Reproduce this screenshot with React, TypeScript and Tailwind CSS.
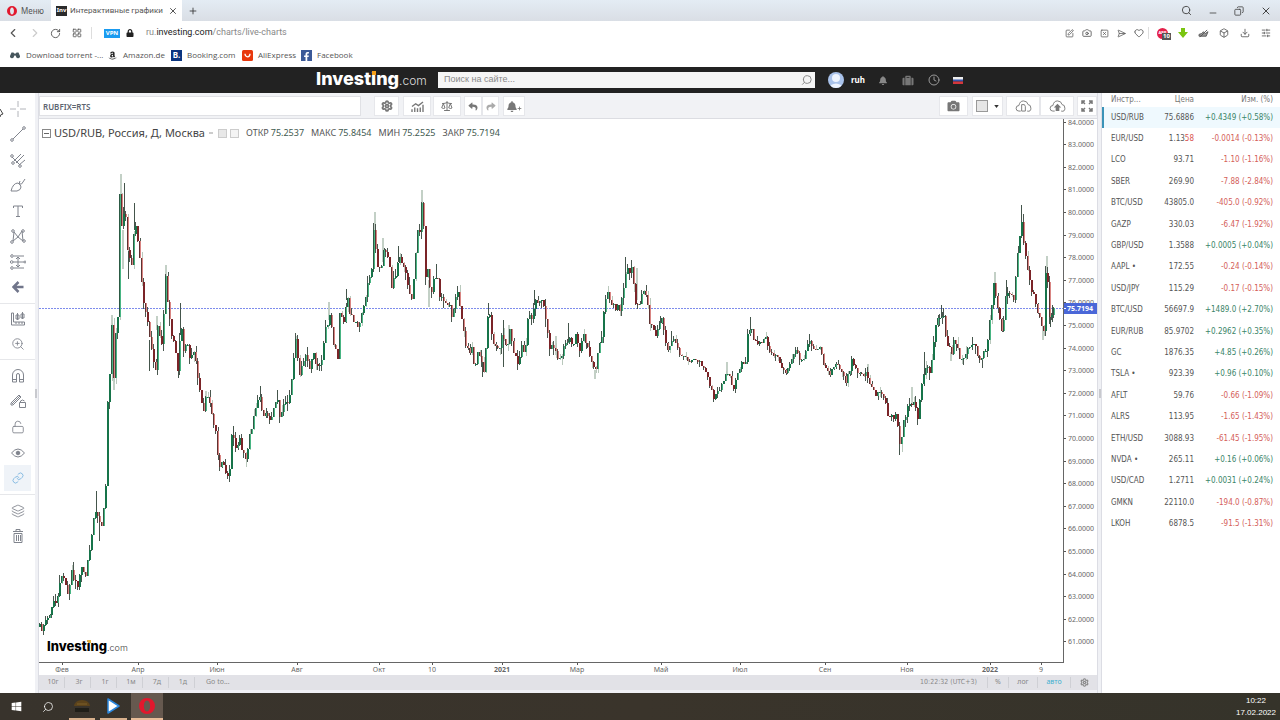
import React from "react";
import {
  Search, Minus, Copy, X, ChevronLeft, ChevronRight, RotateCw, LayoutGrid, SquarePen, Camera, SquareX,
  SendHorizontal, Heart, Box, Download, SlidersHorizontal, Clock, Settings, Scale, ZoomIn,
  LockOpen, Eye, Link, Layers, Plus,
} from "lucide-react";
import { FaCamera, FaReply, FaShare, FaBell, FaLock, FaWindows, FaFacebookF, FaAmazon, FaSuitcase } from "react-icons/fa";

/* ---------- data ---------- */

type Quote = [name: string, price: string, tick: string, change: string];

const quotes: Quote[] = [
  ["USD/RUB", "75.6886", "", "+0.4349 (+0.58%)"],
  ["EUR/USD", "1.13", "58", "-0.0014 (-0.13%)"],
  ["LCO", "93.71", "", "-1.10 (-1.16%)"],
  ["SBER", "269.90", "", "-7.88 (-2.84%)"],
  ["BTC/USD", "43805.0", "", "-405.0 (-0.92%)"],
  ["GAZP", "330.03", "", "-6.47 (-1.92%)"],
  ["GBP/USD", "1.3588", "", "+0.0005 (+0.04%)"],
  ["AAPL •", "172.55", "", "-0.24 (-0.14%)"],
  ["USD/JPY", "115.29", "", "-0.17 (-0.15%)"],
  ["BTC/USD", "56697.9", "", "+1489.0 (+2.70%)"],
  ["EUR/RUB", "85.9702", "", "+0.2962 (+0.35%)"],
  ["GC", "1876.35", "", "+4.85 (+0.26%)"],
  ["TSLA •", "923.39", "", "+0.96 (+0.10%)"],
  ["AFLT", "59.76", "", "-0.66 (-1.09%)"],
  ["ALRS", "113.95", "", "-1.65 (-1.43%)"],
  ["ETH/USD", "3088.93", "", "-61.45 (-1.95%)"],
  ["NVDA •", "265.11", "", "+0.16 (+0.06%)"],
  ["USD/CAD", "1.2711", "", "+0.0031 (+0.24%)"],
  ["GMKN", "22110.0", "", "-194.0 (-0.87%)"],
  ["LKOH", "6878.5", "", "-91.5 (-1.31%)"],
];

/* Closing levels along the time axis: x, y pairs in chart units. */
const closes = [
  39, 626, 41, 629, 43, 624, 47, 620, 50, 612, 53, 600, 55, 606, 58, 588, 61, 576, 64, 580, 67, 596, 71, 571, 74, 580,
  77, 586, 81, 570, 85, 577, 88, 556, 91, 536, 94, 512, 97, 512, 100, 528, 102, 522, 104, 500, 106, 470, 107, 405, 109, 372,
  111, 328, 113, 378, 115, 332, 117, 315, 119, 192, 121, 230, 123, 213, 125, 220, 127, 250, 131, 268, 133, 238,
  135, 227, 138, 246, 140, 274, 143, 300, 147, 320, 150, 345, 155, 370, 157, 328, 161, 348, 163, 312, 165, 278,
  167, 304, 170, 332, 174, 343, 177, 368, 179, 345, 181, 330, 183, 352, 187, 345, 190, 360, 194, 350, 197, 378, 200, 396,
  202, 415, 205, 400, 209, 402, 211, 416, 215, 434, 217, 458, 220, 468, 222, 457, 226, 478, 230, 470, 231, 433,
  235, 447, 239, 441, 245, 462, 248, 442, 252, 424, 254, 411, 258, 396, 262, 410, 267, 420, 272, 415, 276, 395, 280, 420,
  284, 400, 288, 400, 291, 380, 295, 338, 299, 372, 305, 353, 309, 366, 313, 356, 316, 371, 321, 358, 325, 331, 329, 315,
  333, 346, 337, 356, 339, 316, 343, 320, 347, 296, 350, 318, 354, 322, 359, 325, 363, 307, 367, 282, 371, 270,
  373, 232, 377, 265, 380, 272, 382, 253, 386, 248, 391, 284, 395, 276, 399, 254, 404, 270, 407, 288, 411, 298, 414, 272,
  416, 230, 418, 236, 420, 222, 421, 200, 423, 227, 425, 278, 427, 270, 430, 295, 436, 270, 439, 298, 446, 300, 451, 314,
  457, 294, 461, 322, 464, 338, 468, 356, 471, 351, 474, 370, 477, 350, 480, 362, 484, 372, 486, 330, 488, 304,
  492, 342, 498, 352, 501, 338, 506, 349, 509, 332, 513, 355, 517, 363, 521, 349, 524, 356, 527, 318, 531, 320, 535, 300,
  541, 298, 545, 316, 549, 345, 555, 353, 560, 360, 565, 343, 570, 340, 572, 352, 574, 331, 580, 350, 583, 332, 589, 355,
  594, 373, 597, 350, 601, 336, 604, 300, 606, 291, 611, 308, 619, 308, 623, 287, 626, 270, 632, 270, 636, 312, 640, 300,
  644, 284, 647, 306, 649, 322, 655, 336, 661, 320, 667, 352, 672, 336, 679, 353, 688, 360, 700, 362, 706, 376, 713, 398,
  720, 388, 726, 370, 733, 388, 738, 372, 742, 362, 745, 360, 747, 336, 750, 327, 753, 338, 760, 345, 765, 335, 769, 352,
  776, 355, 780, 366, 786, 372, 795, 350, 802, 364, 808, 342, 814, 352, 818, 345, 822, 360, 829, 376, 834, 363, 839, 368,
  845, 384, 851, 361, 858, 375, 866, 374, 874, 395, 882, 393, 887, 414, 895, 416, 900, 448, 903, 423, 908, 401, 913, 402,
  917, 421, 922, 375, 930, 368, 935, 325, 942, 311, 946, 340, 950, 355, 954, 340, 960, 361, 967, 350, 972, 343, 980, 360,
  986, 345, 990, 316, 993, 284, 998, 310, 1002, 336, 1004, 297, 1010, 290, 1013, 299, 1018, 242, 1021, 225, 1025, 260,
  1030, 284, 1037, 311, 1042, 330, 1044, 330, 1045, 275, 1047, 285, 1049, 316, 1051, 318, 1053, 309,
];

/* Long shadows: x, top, bottom, pale */
const shadows: [number, number, number, boolean][] = [
  [111, 315, 330, true], [113, 378, 390, true], [120, 174, 200, true], [124, 183, 215, false], [122, 230, 269, true],
  [134, 203, 230, false], [128, 225, 279, false], [149, 340, 371, false], [156, 316, 330, true], [165, 265, 280, true],
  [180, 303, 335, false], [96, 491, 512, false], [99, 512, 541, false], [178, 365, 378, false], [205, 391, 405, true],
  [233, 426, 446, false], [260, 386, 402, false], [277, 390, 404, false], [295, 336, 350, true], [328, 302, 320, true],
  [346, 289, 300, false], [374, 212, 236, true], [382, 238, 262, true], [398, 246, 262, false], [421, 190, 204, true],
  [428, 280, 307, true], [436, 264, 278, false], [488, 303, 315, false], [482, 362, 377, false], [503, 320, 367, false],
  [508, 325, 345, true], [534, 290, 305, false], [555, 336, 355, true], [568, 323, 342, false], [594, 370, 379, true],
  [625, 257, 280, false], [631, 263, 278, false], [636, 268, 300, true], [660, 316, 328, false], [671, 331, 344, false],
  [713, 390, 402, false], [726, 362, 376, true], [750, 317, 332, false], [809, 334, 345, false], [867, 364, 376, true],
  [899, 440, 455, false], [911, 387, 405, true], [924, 352, 386, false], [941, 305, 318, false], [950, 352, 361, true],
  [972, 337, 350, false], [994, 272, 288, true], [1006, 280, 300, false], [1021, 205, 228, false], [1042, 326, 340, true],
  [1046, 256, 280, true], [1050, 316, 327, false], [1052, 305, 322, false],
];

const noise = (n: number) => {
  const v = Math.sin(n * 127.1 + 31.7) * 43758.5453;
  return v - Math.floor(v);
};

function buildCandles() {
  const out: { x: number; open: number; close: number; hi: number; lo: number; r: number }[] = [];
  let k = 0;
  let prev = 627;
  for (let i = 0; i < 508; i++) {
    const x = 39 + i * 2;
    while (k < closes.length - 4 && closes[k + 2] <= x) k += 2;
    const t = Math.min(1, (x - closes[k]) / (closes[k + 2] - closes[k]));
    const base = closes[k + 1] + (closes[k + 3] - closes[k + 1]) * t;
    const calm = x < 50 || (x > 650 && x < 890);
    const close = Math.round(base + (noise(i) - 0.5) * (calm ? 5 : 8));
    const reach = calm ? 5 : 8;
    out.push({
      x,
      open: prev,
      close,
      hi: Math.round(Math.min(prev, close) - noise(i + 900) ** 2 * reach),
      lo: Math.round(Math.max(prev, close) + noise(i + 1700) ** 2 * reach),
      r: noise(i + 2500),
    });
    prev = close;
  }
  return out;
}
const candles = buildCandles();

const months: [number, string, boolean][] = [
  [62, "Фев", false], [138, "Апр", false], [217, "Июн", false], [297, "Авг", false], [379, "Окт", false], [432, "10", false],
  [502, "2021", true], [577, "Мар", false], [661, "Май", false], [740, "Июл", false], [825, "Сен", false],
  [907, "Ноя", false], [990, "2022", true], [1041, "9", false],
];

/* ---------- shared pieces ---------- */

function Brand({ dark = false }: { dark?: boolean }) {
  return (
    <a
      href="#home"
      className={
        dark
          ? "flex items-baseline font-['Inter',sans-serif] text-[13px] leading-4 text-black"
          : "flex items-baseline font-['Inter',sans-serif] text-[18px] leading-6 text-white"
      }
    >
      <span className="font-extrabold">
        Invest
        <span className="relative">
          i
          <span
            className={
              dark
                ? "absolute top-[2px] left-px h-[3px] w-[3px] bg-[#e0b040]"
                : "absolute top-[3px] left-px h-[4px] w-[4px] bg-[#f5a01a]"
            }
          />
        </span>
        ng
      </span>
      <span className={dark ? "text-[9px] font-light text-[#444]" : "text-[12px] font-light text-[#ddd]"}>.com</span>
    </a>
  );
}

function OperaMark({ className }: { className: string }) {
  return (
    <svg viewBox="0 0 20 20" className={className} aria-hidden="true">
      <path
        fill="#e2182d"
        fillRule="evenodd"
        d="M10 0a10 10 0 1 0 0 20 10 10 0 0 0 0-20Zm0 3.200c2.300 0 3.900 3 3.900 6.800s-1.600 6.800-3.900 6.800S6.100 13.800 6.100 10 7.700 3.200 10 3.200Z"
      />
    </svg>
  );
}

/* ---------- browser chrome ---------- */

function TabStrip() {
  return (
    <div className="flex h-[21px] items-stretch bg-linear-to-b from-[#e4ecf4] to-[#d9dee5] text-[8px] text-[#555]">
      <button className="flex w-[51px] items-center gap-1 pl-[7px]">
        <OperaMark className="h-[10px] w-[10px]" />
        Меню
      </button>
      <div className="flex w-[131px] items-center gap-[3px] bg-white pr-1 pl-[5px]">
        <span className="flex h-[10px] w-[11px] items-center justify-center bg-[#2b2b2b] text-[6px] font-bold text-white">Inv</span>
        <span className="font-['Roboto',sans-serif] whitespace-nowrap">Интерактивные графики</span>
        <button aria-label="Закрыть вкладку" className="ml-auto"><X className="h-[10px] w-[10px] text-[#333]" /></button>
      </div>
      <button aria-label="Новая вкладка" className="pl-[6px]"><Plus className="h-[10px] w-[10px] text-[#333]" /></button>
      <div className="ml-auto flex items-center gap-[16px] pr-[8px] text-[#444]">
        <button aria-label="Поиск"><Search className="h-[11px] w-[11px]" /></button>
        <button aria-label="Свернуть" className="pt-[5px]"><Minus className="h-[10px] w-[10px]" /></button>
        <button aria-label="Окно"><Copy className="h-[10px] w-[10px] -scale-x-100" /></button>
        <button aria-label="Закрыть"><X className="h-[12px] w-[12px]" /></button>
      </div>
    </div>
  );
}

function AddressBar() {
  return (
    <div className="flex h-6 items-center bg-white pr-[9px] pl-[6px] text-[#555]">
      <button aria-label="Назад"><ChevronLeft className="h-[14px] w-[14px]" /></button>
      <button aria-label="Вперёд" className="ml-[8px]"><ChevronRight className="h-[14px] w-[14px] text-[#ccc]" /></button>
      <button aria-label="Обновить" className="ml-[8px]"><RotateCw className="h-[11px] w-[11px]" /></button>
      <button aria-label="Экспресс-панель" className="ml-[11px]"><LayoutGrid className="h-[10px] w-[10px]" /></button>
      <span className="ml-[9px] h-3 w-px bg-[#ddd]" />
      <span className="ml-[12px] flex h-[9px] w-4 items-center justify-center bg-[#1a9bf0] text-[6px] font-bold text-white">VPN</span>
      <FaLock className="ml-[6px] h-[8px] w-[8px] text-[#222]" />
      <span className="ml-[12px] font-['Roboto',sans-serif] text-[9px] text-[#888]">
        ru.<span className="text-[#222]">investing.com</span>/charts/live-charts
      </span>
      <div className="ml-auto flex items-center gap-[8px]">
        <SquarePen className="h-[9px] w-[9px]" />
        <Camera className="h-[10px] w-[10px]" />
        <SquareX className="h-[9px] w-[9px]" />
        <SendHorizontal className="h-[9px] w-[9px]" />
        <Heart className="h-[10px] w-[10px]" />
        <span className="-ml-1 h-3 w-px bg-[#ddd]" />
        <span className="relative flex h-[11px] w-[11px] items-center justify-center rounded-full bg-[#e3204a] text-[4px] font-bold text-white">
          ABP
          <span className="absolute top-[5px] left-[5px] bg-[#555] px-px text-[6px] leading-[7px]">10</span>
        </span>
        <svg viewBox="0 0 10 10" className="ml-[2px] h-[10px] w-[10px]"><path fill="#7ac511" d="M3 0h4v4h3L5 10 0 4h3Z" /></svg>
        <svg viewBox="0 0 12 10" className="ml-[2px] h-[9px] w-[11px]" fill="none" stroke="currentColor">
          <path d="M1 8h8L11 3 8 5 6 3 4 5 1 6Z" fill="#999" /><path d="m2 9 8-8" />
        </svg>
        <Box className="ml-[2px] h-[10px] w-[10px]" />
        <Download className="ml-[3px] h-[10px] w-[10px]" />
        <SlidersHorizontal className="ml-[3px] h-[10px] w-[10px]" />
      </div>
    </div>
  );
}

function Bookmarks() {
  return (
    <nav className="flex h-[22px] items-center bg-white pb-[2px] pl-[10px] text-[8px] text-[#555]">
      <a href="#dl" className="flex w-[98px] items-center gap-[6px] whitespace-nowrap">
        <svg viewBox="0 0 10 8" className="h-[8px] w-[10px]" fill="#46565c">
          <path d="M1.500 1.500h2l.6 1h1.800l.6-1h2L10 5a2 2 0 1 1-4 .5L5.500 4.500h-1L4 5.500A2 2 0 1 1 0 5Z" />
        </svg>
        <span className="font-['Open_Sans',sans-serif]">Download torrent -...</span>
      </a>
      <a href="#amazon" className="flex w-[63px] items-center gap-[6px]">
        <FaAmazon className="h-[9px] w-[9px] text-[#222]" />
        <span className="font-['Open_Sans',sans-serif]">Amazon.de</span>
      </a>
      <a href="#booking" className="flex w-[71px] items-center gap-[5px]">
        <span className="flex h-[11px] w-[11px] items-center justify-center bg-[#0a3580] text-[8px] font-bold text-white">B.</span>
        <span className="font-['Open_Sans',sans-serif]">Booking.com</span>
      </a>
      <a href="#ali" className="flex w-[59px] items-center gap-[5px]">
        <svg viewBox="0 0 11 11" className="h-[11px] w-[11px]">
          <rect width="11" height="11" rx="1.500" fill="#e8380d" />
          <path d="M3 3.800a2.500 3 0 0 0 5 0" fill="none" stroke="#fff" strokeWidth="1.300" />
        </svg>
        <span className="font-['Open_Sans',sans-serif]">AliExpress</span>
      </a>
      <a href="#fb" className="flex items-center gap-[5px]">
        <span className="flex h-[11px] w-[11px] items-end justify-center bg-[#3b5998]"><FaFacebookF className="h-[9px] w-[9px] text-white" /></span>
        <span className="font-['Open_Sans',sans-serif]">Facebook</span>
      </a>
    </nav>
  );
}

/* ---------- site header ---------- */

function SiteHeader() {
  return (
    <header className="flex h-[26px] items-center bg-[#222] pl-[316px] text-[#999]">
      <div className="w-[122px]"><Brand /></div>
      <label className="flex h-4 w-[377px] items-center bg-[#f5f5f5] pr-[2px] pl-[6px]">
        <input
          aria-label="Поиск на сайте"
          placeholder="Поиск на сайте..."
          className="w-full bg-transparent font-['Liberation_Sans',sans-serif] text-[9px] outline-none placeholder:text-[#888]"
        />
        <Search className="h-[12px] w-[12px] -scale-x-100 text-[#888]" />
      </label>
      <span className="ml-[13px] flex h-4 w-4 items-end justify-center overflow-hidden rounded-full bg-[#a9c2ea]">
        <svg viewBox="0 0 16 16" className="h-4 w-4" fill="#eef4ff"><circle cx="8" cy="6" r="4" /><path d="M3 16v-3q5-3 10 0v3Z" /></svg>
      </span>
      <span className="ml-[7px] w-[13px] text-[8px] font-bold text-white">ruh</span>
      <button aria-label="Уведомления" className="ml-[14px] text-[#888]"><FaBell className="h-[9px] w-[10px]" /></button>
      <button aria-label="Портфель" className="ml-[14px] text-[#777]"><FaSuitcase className="h-[11px] w-[12px]" /></button>
      <button aria-label="История" className="ml-[14px]"><Clock className="h-[12px] w-[12px]" /></button>
      <svg viewBox="0 0 10 7" className="ml-[13px] h-[7px] w-[10px]">
        <path fill="#eee" d="M0 0h10v3H0z" /><path fill="#3556b0" d="M0 2.500h10v2H0z" /><path fill="#d4373c" d="M0 4.500h10V7H0z" />
      </svg>
    </header>
  );
}

/* ---------- drawing tools ---------- */

const stroke = { fill: "none", stroke: "currentColor", strokeWidth: 1 } as const;

function Tool({ label, children, active = false }: { label: string; children: React.ReactNode; active?: boolean }) {
  return (
    <button
      aria-label={label}
      className={
        active
          ? "flex w-[27px] flex-1 items-center justify-center bg-[#eff3f8] text-[#6aabdc]"
          : "flex w-[27px] flex-1 items-center justify-center text-[#80848d]"
      }
    >
      {children}
    </button>
  );
}

function Glyph({ children }: { children: React.ReactNode }) {
  return <svg viewBox="0 0 16 16" className="h-4 w-4" {...stroke}>{children}</svg>;
}

const Divider = () => <span className="my-[3px] h-px w-full bg-[#e6e7ea]" />;

function DrawingTools() {
  return (
    <aside className="relative flex w-[35px] shrink-0 flex-col items-center bg-white pt-[3px]">
      <svg viewBox="0 0 4 10" className="absolute top-[15px] left-0 h-[10px] w-1"><path d="m0 1 3 5-2 .500L0 9" fill="none" stroke="#444" /></svg>
      <div className="flex h-[204px] flex-col">
        <Tool label="Перекрестие"><Glyph><path d="M8 0v6M8 10v6M0 8h6M10 8h6" opacity=".6" /></Glyph></Tool>
        <Tool label="Линия тренда"><Glyph><path d="M3 13 13 3" /><circle cx="2" cy="14" r="1.300" /><circle cx="14" cy="2" r="1.300" /></Glyph></Tool>
        <Tool label="Вилы"><Glyph><path d="m2 5 8 8M4 9l7-7M6 11l8-8M9 13l6-5" /><circle cx="2" cy="4" r="1.300" /><circle cx="3" cy="11" r="1.300" /><circle cx="10" cy="14" r="1.300" /></Glyph></Tool>
        <Tool label="Кисть"><Glyph><path d="M1 14q2-8 7-8 3 2 3 4 0 3-4 4ZM9 7q3 1 4-2l2-3M9 7l1-3" /></Glyph></Tool>
        <Tool label="Текст"><Glyph><path d="M3.500 5V3h9v2M8 3v11M6 13.500h4" /></Glyph></Tool>
        <Tool label="Паттерны"><Glyph><path d="m3 13 1-9 4 5 4-6 1 10-5-4-5 4" /><circle cx="2" cy="14" r="1.300" /><circle cx="3" cy="3" r="1.300" /><circle cx="13" cy="3" r="1.300" /><circle cx="14" cy="13" r="1.300" /></Glyph></Tool>
        <Tool label="Прогноз"><Glyph><path d="M4 2h10M3 8h11M4 14h10M8 3v10M6 5l2-2 2 2M6 11l2 2 2-2" /><circle cx="2" cy="2" r="1.300" /><circle cx="1.700" cy="8" r="1.300" /><circle cx="15" cy="8" r="1" /><circle cx="2" cy="14" r="1.300" /></Glyph></Tool>
        <Tool label="Назад"><svg viewBox="0 0 12 12" className="h-3 w-3"><path d="M11.500 6H2M6.500 1 1.500 6l5 5" fill="none" stroke="#70758a" strokeWidth="2.500" /></svg></Tool>
      </div>
      <Divider />
      <div className="flex h-[49px] flex-col">
        <Tool label="Измерить"><Glyph><path d="M1.500 2v12h13v-3h-11V2ZM7.500 2v7M6 4h3v4H6ZM12.500 1v7M11 3h3v4h-3ZM6 11v2M9 11v2M12 11v2" /></Glyph></Tool>
        <Tool label="Увеличить"><ZoomIn className="h-[14px] w-[14px]" strokeWidth={1.500} /></Tool>
      </div>
      <Divider />
      <div className="flex h-[128px] flex-col">
        <Tool label="Магнит"><Glyph><path d="M2.500 14V7a5.500 5.500 0 0 1 11 0v7h-4V7a1.500 1.500 0 0 0-3 0v7ZM2.500 11.500h4M9.500 11.500h4" /></Glyph></Tool>
        <Tool label="Режим рисования"><Glyph><path d="m1 10 8-8 2 2-8 8H1ZM2 11l8-8M9.500 9.500h6v5h-6ZM10.500 9.500V8q2-2 4 0" /></Glyph></Tool>
        <Tool label="Заблокировать"><LockOpen className="h-[14px] w-[14px]" strokeWidth={1.500} /></Tool>
        <Tool label="Скрыть">
          <Glyph><path d="M1.500 8q6.500-8 13 0-6.500 8-13 0Z" /><circle cx="8" cy="8" r="1.800" fill="currentColor" /></Glyph>
        </Tool>
        <Tool label="Связать" active><Link className="h-[12px] w-[12px]" strokeWidth={1.500} /></Tool>
      </div>
      <Divider />
      <div className="flex h-[51px] flex-col">
        <Tool label="Слои"><Layers className="h-[14px] w-[14px]" strokeWidth={1.500} /></Tool>
        <Tool label="Удалить"><Glyph><path d="M3 3.500h10M6 3.500v-2h4v2M4 5.500h8v9H4ZM6.500 7v6M8.500 7v6M10.500 7v6" /></Glyph></Tool>
      </div>
    </aside>
  );
}

/* ---------- chart ---------- */

const btn = "flex h-5 items-center justify-center border border-[#e6e7eb] bg-white text-[#777]";

function ChartToolbar() {
  return (
    <div className="flex h-[26px] items-start border-b border-[#dcdde2] bg-[#f1f2f5] pt-[3px]">
      <input
        aria-label="Инструмент"
        defaultValue="RUBFIX=RTS"
        className="h-5 w-[322px] border border-[#e0e1e5] bg-white pl-[3px] text-[8px] font-semibold text-[#5d6570] outline-none"
      />
      <button aria-label="Настройки" className={`${btn} ml-[13px] w-[25px]`}><Settings className="h-[12px] w-[12px]" strokeWidth={3.500} /></button>
      <button aria-label="Индикаторы" className={`${btn} ml-[4px] w-[28px]`}>
        <svg viewBox="0 0 14 12" className="h-[11px] w-[13px]" {...stroke}><path d="m1 6 4-3 3 2 5-4M1 12V9M4 12V7M7 12V8M10 12V7M13 12V4" strokeWidth="1.500" /></svg>
      </button>
      <button aria-label="Сравнить" className={`${btn} ml-[2px] w-[28px]`}><Scale className="h-[12px] w-[12px]" /></button>
      <button aria-label="Отменить" className={`${btn} ml-[3px] w-[18px]`}><FaReply className="h-[9px] w-[10px]" /></button>
      <button aria-label="Вернуть" className={`${btn} w-[17px]`}><FaShare className="h-[9px] w-[10px] text-[#aaa]" /></button>
      <button aria-label="Оповещение" className={`${btn} ml-[4px] w-[22px]`}>
        <FaBell className="h-[11px] w-[10px]" /><Plus className="mt-[5px] h-[7px] w-[5px]" strokeWidth={4} />
      </button>
      <button aria-label="Снимок" className={`${btn} ml-auto w-[29px]`}><FaCamera className="h-[12px] w-[13px]" /></button>
      <button aria-label="Тема" className={`${btn} ml-[4px] w-[31px] gap-[6px]`}>
        <span className="h-[12px] w-[12px] border border-[#999] bg-[#e6e6e6]" />
        <svg viewBox="0 0 6 4" className="h-[3px] w-[5px]"><path fill="#333" d="M0 0h6L3 4Z" /></svg>
      </button>
      <button aria-label="Загрузить график" className={`${btn} ml-[3px] w-[34px]`}>
        <svg viewBox="0 0 18 13" className="h-[12px] w-[17px]" {...stroke}><path d="M6 12H4a3 3 0 0 1 0-6q1-5 5-5t5 4q3 0 3 4t-4 3M7 12V5h3l1 2v5Z" /></svg>
      </button>
      <button aria-label="Сохранить график" className={`${btn} w-[34px]`}>
        <svg viewBox="0 0 18 13" className="h-[12px] w-[17px]" {...stroke}>
          <path d="M6 12H4a3 3 0 0 1 0-6q1-5 5-5t5 4q3 0 3 4t-4 3" /><path d="m9 4 4 4h-2v4H7V8H5Z" fill="currentColor" stroke="none" />
        </svg>
      </button>
      <button aria-label="Во весь экран" className={`${btn} ml-[3px] w-[20px]`}>
        <svg viewBox="0 0 12 12" className="h-[12px] w-[12px]" {...stroke} strokeWidth={1.500}>
          <path d="M1 4V1h3M1 1l3 3M8 1h3v3M11 1 8 4M1 8v3h3M1 11l3-3M8 11h3V8M11 11 8 8" />
        </svg>
      </button>
    </div>
  );
}

function CandleChart() {
  return (
    <svg viewBox="39 119 1058 556" preserveAspectRatio="xMinYMin meet" className="block w-full" role="img" aria-label="USD/RUB">
      <g shapeRendering="crispEdges">
        <path d="M39 308.500H1063" stroke="#7d8cec" strokeDasharray="2 1" />
        {shadows.map(([x, a, b, pale]) => (
          <rect key={x} x={x} y={a} width={pale ? 2 : 1} height={b - a} fill={pale ? "#c3d0c6" : "#44554b"} />
        ))}
        {candles.map(({ x, open, close, hi, lo, r }) => {
          const up = close <= open;
          const top = Math.min(open, close);
          const h = Math.max(1, Math.abs(open - close));
          const solid = r > 0.62;
          const left = up ? (solid ? "#17744a" : "#2c5a44") : solid ? "#7b2428" : "#5f3231";
          const right = up ? (solid ? "#17744a" : "#48b583") : solid ? "#7b2428" : "#d98583";
          return (
            <g key={x}>
              <rect x={r > 0.3 ? x : x + 1} y={hi} width={1} height={lo - hi} fill={r < 0.2 ? "#b9c8bc" : "#4a574f"} />
              <rect x={x} y={top} width={1} height={h} fill={left} />
              <rect x={x + 1} y={top} width={1} height={h} fill={right} />
            </g>
          );
        })}
        <path d="M39 662.500H1063.500V119" fill="none" stroke="#666" />
        {months.map(([x]) => <rect key={x} x={x} y={663} width={1} height={2} fill="#555" />)}
        {Array.from({ length: 24 }, (_, i) => <rect key={i} x={1064} y={Math.round(121.500 + i * 22.600)} width={2} height={1} fill="#555" />)}
      </g>
      <g fontFamily="'Noto Sans', sans-serif" fontSize="7" fill="#666">
        {Array.from({ length: 24 }, (_, i) => (
          <text key={i} x={1068} y={Math.round(124.500 + i * 22.600)}>{`${84 - i}.0000`}</text>
        ))}
        {months.map(([x, label, bold]) => (
          <text key={x} x={x} y={672} textAnchor="middle" fontWeight={bold ? 700 : 400}>{label}</text>
        ))}
        <rect x={1064} y={303} width={33} height={11} fill="#4a67d8" />
        <rect x={1064} y={308} width={2} height={1} fill="#fff" />
        <text x={1067} y={311} fill="#fff" fontWeight={700}>75.7194</text>
      </g>
    </svg>
  );
}

const ohlc = [["ОТКР", "75.2537"], ["МАКС", "75.8454"], ["МИН", "75.2525"], ["ЗАКР", "75.7194"]];

function ChartArea() {
  return (
    <div className="relative flex-1 bg-white">
      <CandleChart />
      <div className="absolute top-[6px] left-[3px] flex items-center text-[#555]">
        <span className="flex h-[9px] w-[9px] items-center justify-center border border-[#888]"><span className="h-px w-[5px] bg-[#666]" /></span>
        <h1 className="ml-[3px] w-[157px] text-[11px] leading-4 whitespace-nowrap text-[#444]">USD/RUB, Россия, Д, Москва</h1>
        <span className="flex w-[35px] gap-[3px]">
          <span className="mt-[3px] mr-[2px] -ml-[2px] h-[2px] w-[4px] bg-[#ccc]" />
          <span className="h-[9px] w-[9px] border border-[#ccc] bg-[#e8e8e8]" />
          <span className="h-[9px] w-[9px] border border-[#ccc] bg-[#f4f4f4]" />
        </span>
        <dl className="flex gap-[7px] text-[9px] leading-4 text-[#3f5a50]">
          {ohlc.map(([k, v]) => (
            <div key={k} className="flex gap-[2px]"><dt className="text-[#555]">{k}</dt><dd>{v}</dd></div>
          ))}
        </dl>
      </div>
      <div className="absolute top-[519px] left-[8px]"><Brand dark /></div>
    </div>
  );
}

function RangeBar() {
  return (
    <div className="flex h-[15px] items-center bg-[#e2e2e7] text-[7px] text-[#888]">
      {["10г", "3г", "1г", "1м", "7д", "1д"].map((r) => (
        <button key={r} className="h-[11px] w-[26px] border-r border-[#cfd0d5] pl-[3px]">{r}</button>
      ))}
      <button className="ml-[11px]">Go to...</button>
      <span className="ml-auto w-[67px] font-['DejaVu_Sans_Condensed','DejaVu_Sans',sans-serif] whitespace-nowrap">10:22:32 (UTC+3)</span>
      <button className="h-[11px] w-[22px] border-x border-[#cfd0d5]">%</button>
      <button className="h-[11px] w-[29px] border-r border-[#cfd0d5]">лог</button>
      <button className="h-[11px] w-[33px] border-r border-[#cfd0d5] text-[#3fb0d0]">авто</button>
      <button aria-label="Параметры" className="flex w-[26px] justify-center"><Settings className="h-[9px] w-[9px]" strokeWidth={3} /></button>
    </div>
  );
}

/* ---------- watch list ---------- */

function WatchList() {
  return (
    <aside className="w-[178px] shrink-0 bg-white">
      <table className="h-[442px] w-full table-fixed border-collapse font-['DejaVu_Sans_Condensed','DejaVu_Sans',sans-serif] text-[8px] leading-3 text-[#555]">
        <thead>
          <tr className="h-[14px] text-[#777]">
            <th className="w-[44px] pl-[8px] text-left font-normal">Инстр...</th>
            <th className="w-[47px] text-right font-normal">Цена</th>
            <th className="pr-[7px] text-right font-normal">Изм. (%)</th>
          </tr>
        </thead>
        <tbody>
          {quotes.map(([name, price, tick, change], i) => (
            <tr key={i} className={i === 0 ? "bg-[#eff9fe]" : ""}>
              <td className={i === 0 ? "border-l-2 border-[#3a93b8] pl-[7px]" : "pl-[8px]"}>{name}</td>
              <td className="text-right">{price}<span className="text-[#d9534f]">{tick}</span></td>
              <td className={change[0] === "+" ? "pr-[7px] text-right whitespace-nowrap text-[#3a8468]" : "pr-[7px] text-right whitespace-nowrap text-[#d4605a]"}>
                {change}
              </td>
            </tr>
          ))}
        </tbody>
      </table>
    </aside>
  );
}

/* ---------- desktop taskbar ---------- */

function Taskbar() {
  return (
    <footer className="flex h-[27px] items-stretch bg-linear-to-r from-[#38332c] via-[#3a342b] to-[#35332a] text-white">
      <button aria-label="Пуск" className="flex w-8 items-center justify-center"><FaWindows className="h-[11px] w-[11px]" /></button>
      <button aria-label="Поиск" className="flex w-8 items-center justify-center"><Search className="h-[12px] w-[12px] -scale-x-100" strokeWidth={1.500} /></button>
      <button aria-label="Open" className="ml-[5px] flex w-[26px] items-center justify-center border-b-2 border-[#d8b08c]">
        <svg viewBox="0 0 16 14" className="h-[14px] w-4">
          <path d="M0 7a8 6 0 0 1 16 0Z" fill="#5c431b" /><path d="M1 9h14v4H1Z" fill="#1f1e18" /><path d="M3 5h10" stroke="#7d602a" />
        </svg>
      </button>
      <button aria-label="Проигрыватель" className="ml-[5px] flex w-[27px] items-center justify-center border-b-2 border-[#d8b08c]">
        <svg viewBox="0 0 13 16" className="h-4 w-[13px]"><path d="M1 1v14l11-7Z" fill="#fff" stroke="#2b86dc" strokeWidth="1.500" strokeLinejoin="round" /></svg>
      </button>
      <button aria-label="Opera" className="ml-[4px] flex w-[32px] items-center justify-center border-b-2 border-[#e8bc98] bg-[#66594f]">
        <OperaMark className="h-4 w-4" />
      </button>
      <div className="ml-auto flex flex-col items-center justify-center pr-1 font-['Liberation_Sans',sans-serif] text-[8px] leading-3">
        <time>10:22</time>
        <time>17.02.2022</time>
      </div>
    </footer>
  );
}

export default function App() {
  return (
    <div className="flex min-h-screen flex-col bg-white font-['Noto_Sans',sans-serif]">
      <TabStrip />
      <AddressBar />
      <Bookmarks />
      <SiteHeader />
      <main className="flex flex-1">
        <DrawingTools />
        <div className="flex w-1 shrink-0 items-center border-r border-[#dcdde4] bg-[#f0f1f5]">
          <span className="h-[9px] w-[2px] bg-[#c8c9ce]" />
        </div>
        <section className="flex min-w-0 flex-1 flex-col bg-[#f0f0f5] pb-[3px]">
          <ChartToolbar />
          <ChartArea />
          <RangeBar />
        </section>
        <div className="flex w-[5px] shrink-0 items-center justify-center border-x border-[#dcdde4] bg-[#f0f1f5]">
          <span className="h-[9px] w-[2px] bg-[#c8c9ce]" />
        </div>
        <WatchList />
      </main>
      <Taskbar />
    </div>
  );
}
